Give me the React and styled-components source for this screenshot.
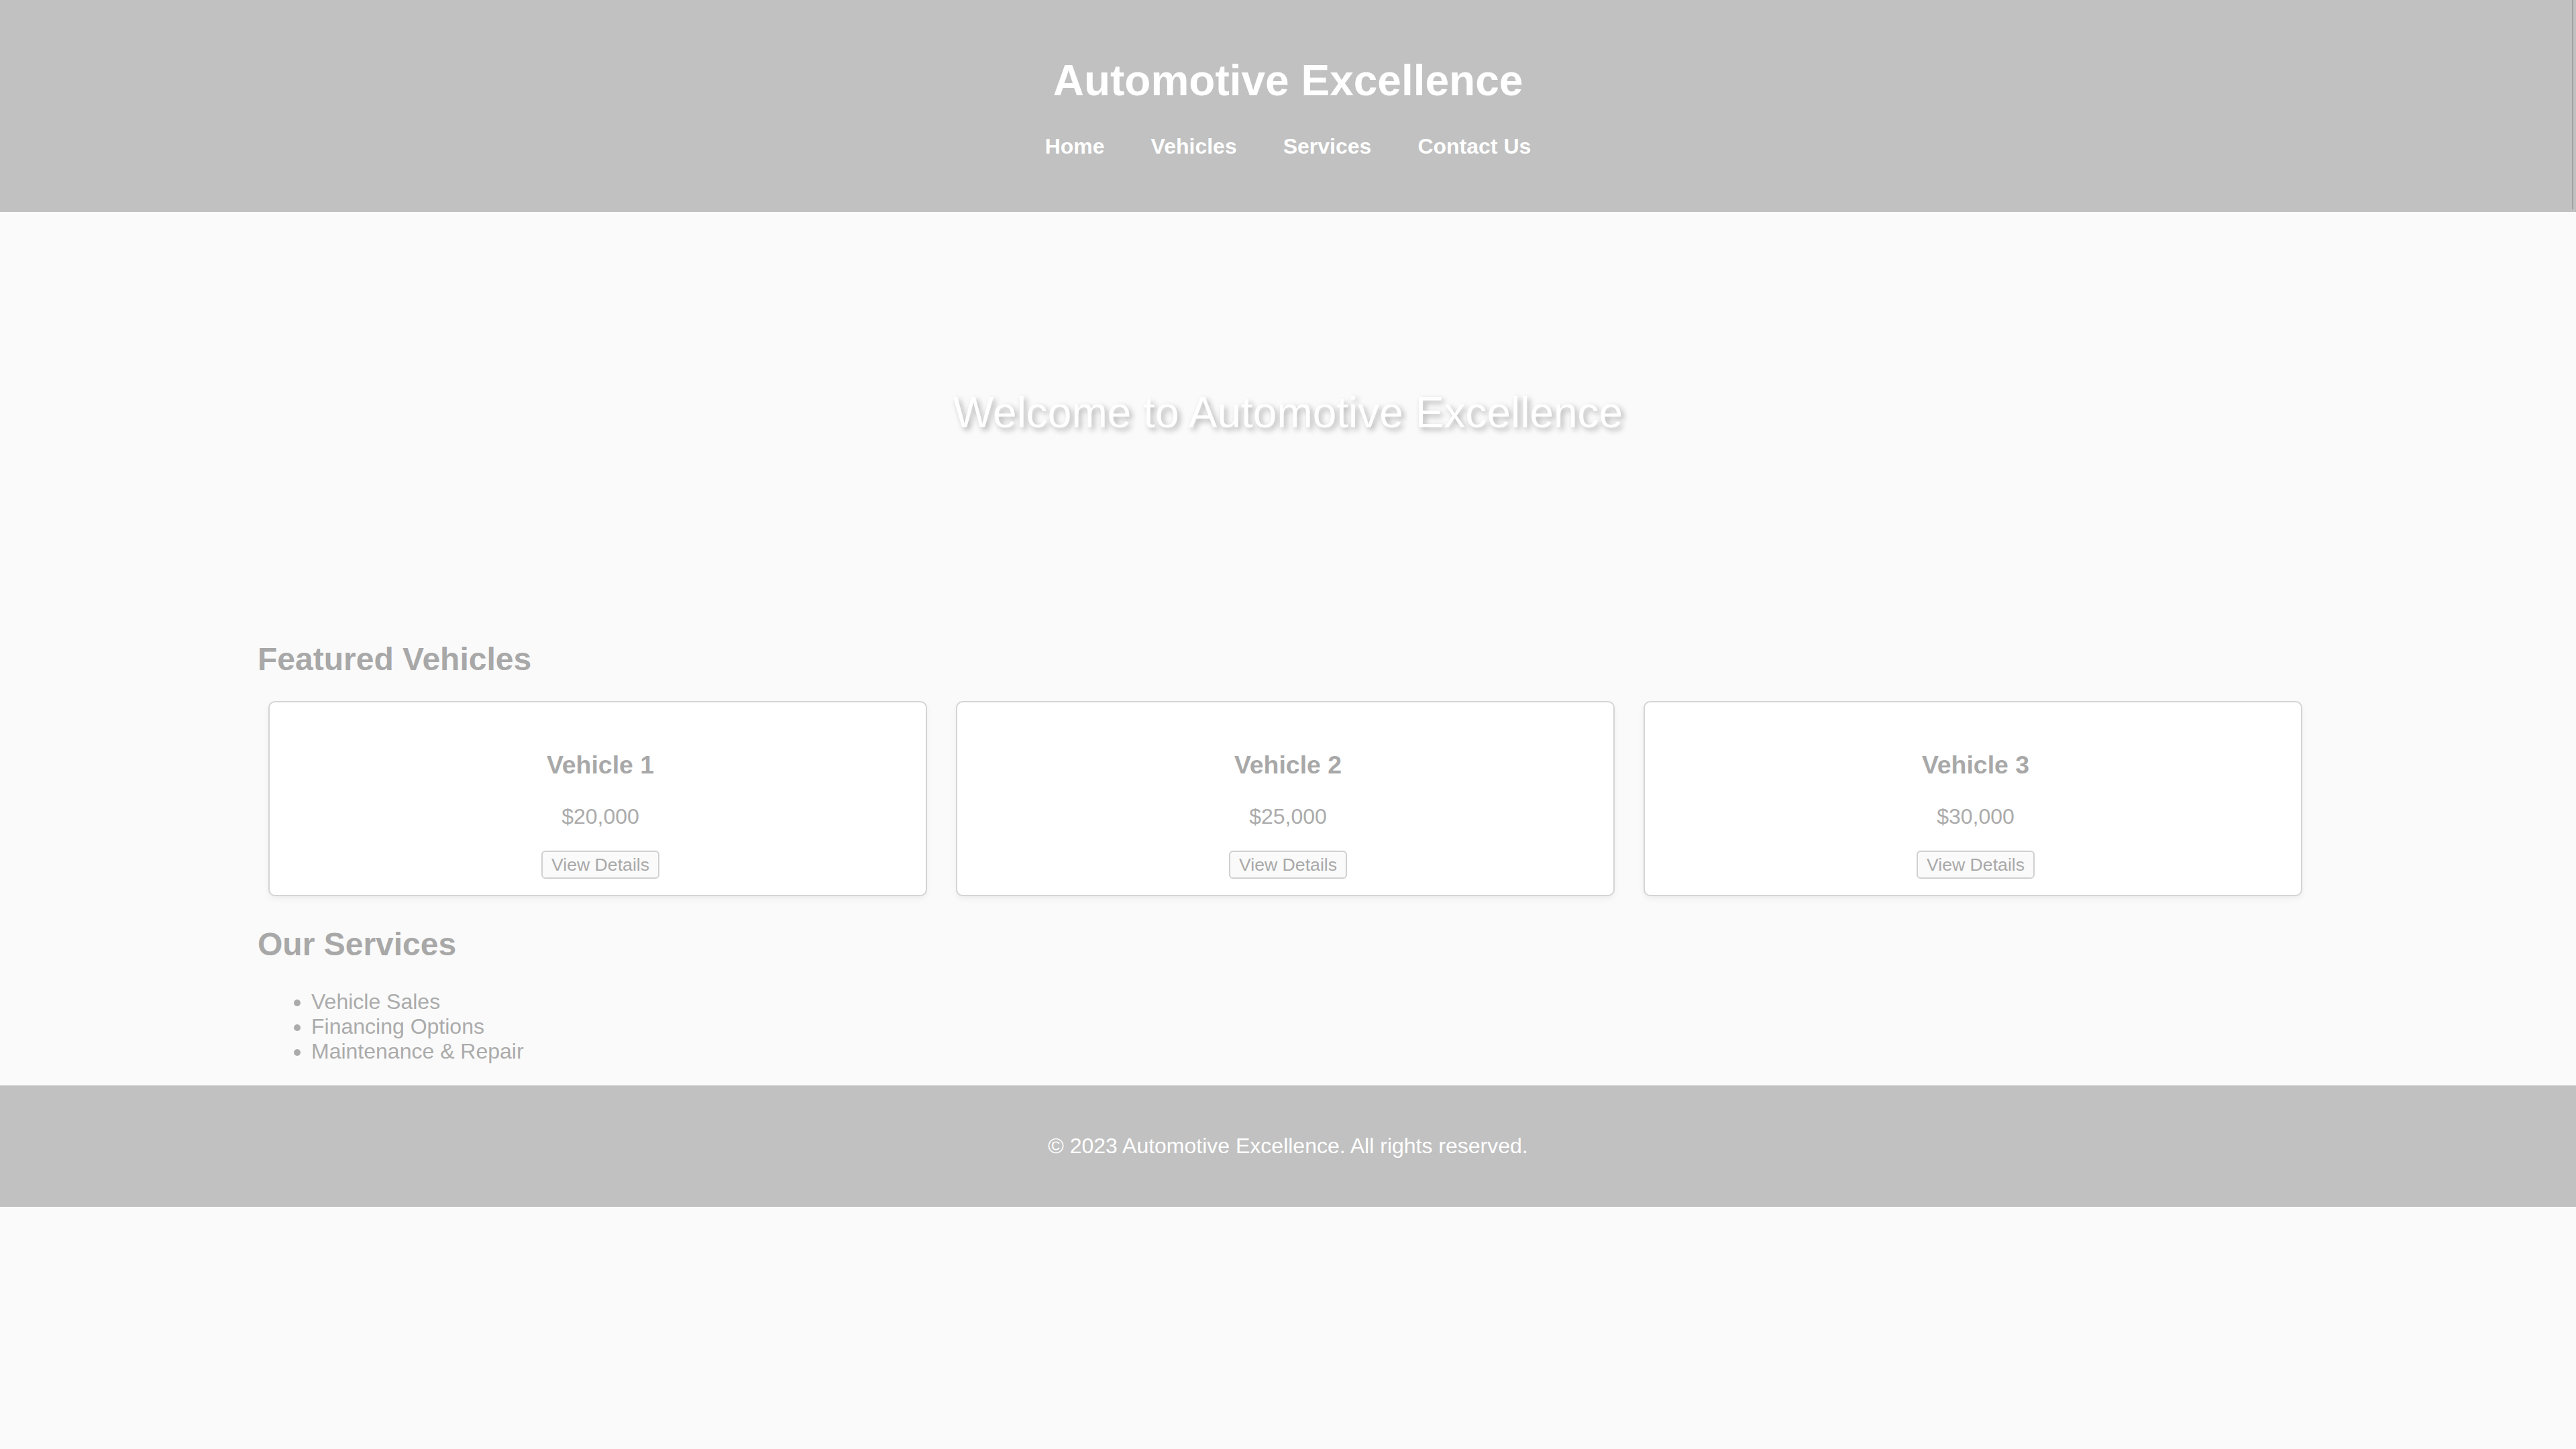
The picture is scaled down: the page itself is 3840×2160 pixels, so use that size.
import React from 'react';
import styled, { createGlobalStyle } from 'styled-components';

const GlobalStyle = createGlobalStyle`
  html, body {
    margin: 0;
    padding: 0;
    background: #fafafa;
    font-family: "Liberation Sans", Arial, sans-serif;
    font-size: 32px;
    color: #aaaaaa;
  }
`;

const Header = styled.header`
  position: relative;
  box-sizing: border-box;
  height: 316px;
  padding-top: 84px;
  background: #c1c1c1;
  color: #ffffff;
  text-align: center;

  &::after {
    content: '';
    position: absolute;
    top: 0;
    right: 4px;
    width: 2px;
    height: 312px;
    background: #a2a2a2;
  }
`;

const Title = styled.h1`
  margin: 0 0 42px;
  font-size: 64px;
  font-weight: bold;
  line-height: 1.15;
`;

const Nav = styled.nav`
  display: flex;
  justify-content: center;
  gap: 69px;
`;

const NavLink = styled.a`
  color: #ffffff;
  font-size: 32px;
  font-weight: bold;
  line-height: 1.15;
  text-decoration: none;
`;

const Hero = styled.section`
  display: flex;
  align-items: center;
  justify-content: center;
  height: 600px;
`;

const HeroText = styled.h2`
  margin: 0;
  font-size: 64px;
  font-weight: normal;
  line-height: 1.15;
  color: #ffffff;
  text-shadow: 4px 4px 8px rgba(0, 0, 0, 0.3);
`;

const Main = styled.main`
  width: 3072px;
  margin: 0 auto;
`;

const SectionTitle = styled.h2`
  margin: ${(p) => p.$spacing};
  font-size: 48px;
  font-weight: bold;
  line-height: 1.15;
  color: #a8a8a8;
`;

const CardRow = styled.div`
  display: grid;
  grid-template-columns: repeat(3, 982px);
  gap: 43px;
  padding-left: 16px;
`;

const Card = styled.div`
  box-sizing: border-box;
  height: 291px;
  padding: 35px 28px 23px 36px;
  background: #ffffff;
  border: 2px solid #d4d4d4;
  border-radius: 10px;
  box-shadow: 0 4px 10px rgba(0, 0, 0, 0.05);
  text-align: center;
`;

const CardTitle = styled.h3`
  margin: 37px 0;
  font-size: 37.44px;
  font-weight: bold;
  line-height: 1.15;
  color: #a8a8a8;
`;

const Price = styled.p`
  margin: 0 0 32px;
  font-size: 32px;
  line-height: 1.15;
  color: #ababab;
`;

const DetailsButton = styled.button`
  box-sizing: border-box;
  height: 42px;
  padding: 4px 13px;
  font-family: "Liberation Sans", Arial, sans-serif;
  font-size: 26.67px;
  line-height: 1.15;
  color: #a9a9a9;
  background: #fafafa;
  border: 2px solid #d0d0d0;
  border-radius: 6px;
`;

const ServiceList = styled.ul`
  margin: 0;
  padding: 0 0 32px 80px;
  font-size: 32px;
  line-height: 1.15;
  color: #ababab;
`;

const Footer = styled.footer`
  padding: 40px 0;
  background: #c1c1c1;
  color: #ffffff;
  text-align: center;
`;

const FooterText = styled.p`
  margin: 32px 0;
  font-size: 32px;
  line-height: 1.15;
`;

const vehicles = [
  { name: 'Vehicle 1', price: '$20,000' },
  { name: 'Vehicle 2', price: '$25,000' },
  { name: 'Vehicle 3', price: '$30,000' },
];

const services = ['Vehicle Sales', 'Financing Options', 'Maintenance & Repair'];

const App = () => (
  <>
    <GlobalStyle />
    <Header>
      <Title>Automotive Excellence</Title>
      <Nav>
        <NavLink href="#">Home</NavLink>
        <NavLink href="#">Vehicles</NavLink>
        <NavLink href="#">Services</NavLink>
        <NavLink href="#">Contact Us</NavLink>
      </Nav>
    </Header>
    <Hero>
      <HeroText>Welcome to Automotive Excellence</HeroText>
    </Hero>
    <Main>
      <SectionTitle $spacing="39px 0 35px">Featured Vehicles</SectionTitle>
      <CardRow>
        {vehicles.map((v) => (
          <Card key={v.name}>
            <CardTitle>{v.name}</CardTitle>
            <Price>{v.price}</Price>
            <DetailsButton>View Details</DetailsButton>
          </Card>
        ))}
      </CardRow>
      <SectionTitle $spacing="44px 0 40px">Our Services</SectionTitle>
      <ServiceList>
        {services.map((s) => (
          <li key={s}>{s}</li>
        ))}
      </ServiceList>
    </Main>
    <Footer>
      <FooterText>© 2023 Automotive Excellence. All rights reserved.</FooterText>
    </Footer>
  </>
);

export default App;
